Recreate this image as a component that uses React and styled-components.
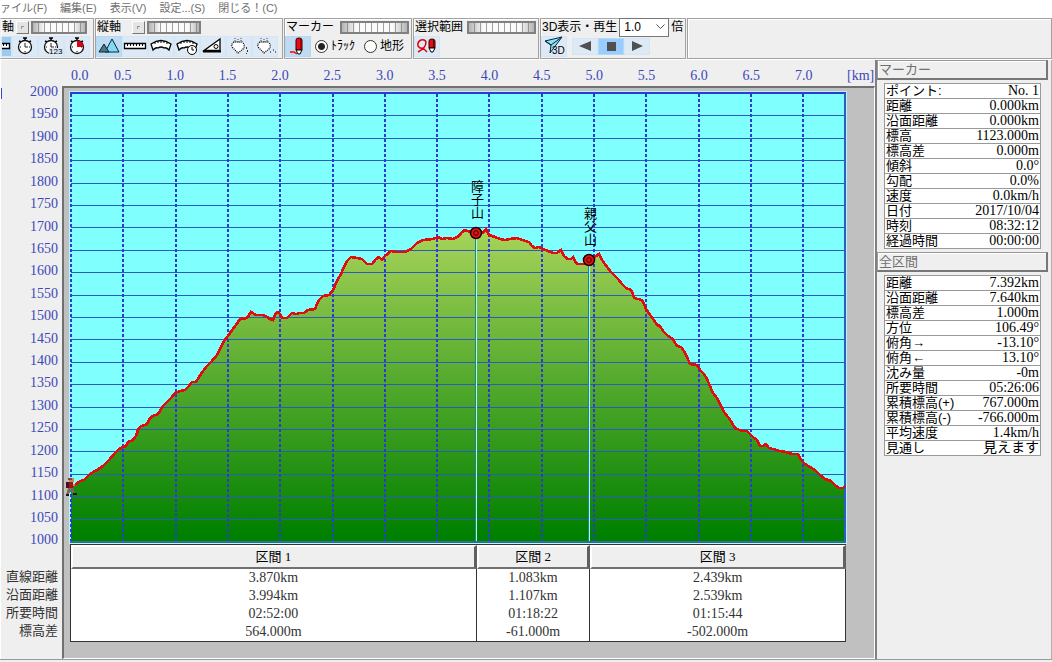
import React, { useState } from "react";
import styled, { createGlobalStyle } from "styled-components";

const TOTAL_KM = 7.392;

const menuItems = ["ァイル(F)", "編集(E)", "表示(V)", "設定...(S)", "閉じる！(C)"];

const kmTicks = [
  "0.0", "0.5", "1.0", "1.5", "2.0", "2.5", "3.0", "3.5",
  "4.0", "4.5", "5.0", "5.5", "6.0", "6.5", "7.0",
];

const heights = Array.from({ length: 21 }, (_, i) => 2000 - i * 50);

const markerRows = [
  ["ポイント:", "No. 1"],
  ["距離", "0.000km"],
  ["沿面距離", "0.000km"],
  ["標高", "1123.000m"],
  ["標高差", "0.000m"],
  ["傾斜", "0.0°"],
  ["勾配", "0.0%"],
  ["速度", "0.0km/h"],
  ["日付", "2017/10/04"],
  ["時刻", "08:32:12"],
  ["経過時間", "00:00:00"],
];

const totalRows = [
  ["距離", "7.392km"],
  ["沿面距離", "7.640km"],
  ["標高差", "1.000m"],
  ["方位", "106.49°"],
  ["俯角→", "-13.10°"],
  ["俯角←", "13.10°"],
  ["沈み量", "-0m"],
  ["所要時間", "05:26:06"],
  ["累積標高(+)", "767.000m"],
  ["累積標高(-)", "-766.000m"],
  ["平均速度", "1.4km/h"],
  ["見通し", "見えます"],
];

const sections = [
  { name: "区間 1", km: 3.87, values: ["3.870km", "3.994km", "02:52:00", "564.000m"] },
  { name: "区間 2", km: 1.083, values: ["1.083km", "1.107km", "01:18:22", "-61.000m"] },
  { name: "区間 3", km: 2.439, values: ["2.439km", "2.539km", "01:15:44", "-502.000m"] },
];

const sectionLabels = ["直線距離", "沿面距離", "所要時間", "標高差"];

const peaks = [
  { name: "障子山", x: 476, y: 233 },
  { name: "親父山", x: 589, y: 260 },
];

// x,y pairs in the chart's viewBox
const track =
  "71,486 75,485 80,481 84,480 90,474 97,470 103,466 109,460 115,453 119,449 123,447 126,446 128,442 133,440 136,436 138,430 141,426 145,425 147,424 150,418 153,416 158,414 160,411 163,406 167,402 171,398 175,393 180,391 185,390 189,386 192,382 196,382 199,377 203,371 207,366 211,362 217,355 221,347 224,341 228,336 232,330 236,325 240,319 247,318 251,312 256,315 262,315 266,316 270,319 273,320 276,313 278,312 280,314 282,318 287,318 292,313 296,314 300,313 304,313 308,310 315,309 317,304 319,300 323,296 329,295 333,290 337,281 341,274 344,267 347,261 351,257 357,258 362,259 367,264 372,264 376,259 379,257 382,260 385,256 391,251 396,252 400,252 405,252 411,249 414,246 417,243 423,240 433,239 438,237 442,239 447,238 453,239 459,236 462,232 465,230 470,232 476,233 483,233 486,229 489,235 495,237 500,239 505,240 510,239 517,238 522,240 529,242 532,246 535,248 539,247 543,249 548,251 553,253 557,253 561,250 564,256 568,259 571,259 573,257 575,261 577,264 584,264 590,261 596,256 599,254 601,258 604,263 611,272 615,276 618,279 622,284 626,288 631,290 633,294 634,298 642,300 644,304 646,309 650,315 654,320 657,325 660,326 663,331 668,336 673,339 677,346 681,347 684,351 687,357 690,364 697,365 700,370 704,374 707,379 710,386 713,393 717,398 720,404 724,412 728,417 731,421 735,428 742,431 747,431 750,434 753,437 757,440 760,446 763,446 766,444 769,448 773,449 780,451 786,452 792,454 798,454 801,460 805,464 810,467 815,470 820,475 825,479 831,481 835,485 839,488 843,488 845,486";

const GlobalStyle = createGlobalStyle`
  * {
    box-sizing: border-box;
  }

  body {
    margin: 0;
    background: #efefef;
    color: #000;
    font-family: "Liberation Sans", "Noto Sans CJK JP", sans-serif;
    font-size: 12px;
  }

  button, input, select {
    margin: 0;
    font: inherit;
    color: inherit;
  }
`;

const StopwatchIcon = ({ variant }) => (
  <svg width="24" height="20" viewBox="0 0 24 20">
    <path d="M10 2h4M12 2v2M6 5l2 1M18 5l-2 1" stroke="#000" strokeWidth="1.5" fill="none" />
    <circle cx="12" cy="11" r="6.5" fill="#fff" stroke="#111" strokeWidth="1.3" />
    {variant === "red" ? (
      <path d="M12 11V4.5A6.5 6.5 0 0 1 18.5 11z" fill="#e00010" />
    ) : (
      <path d="M12 7v4h3" stroke="#222" fill="none" />
    )}
    <path d="M7 11h1M12 15v1M16 11h1" stroke="#111" />
    {variant === "num" && (
      <>
        <path d="M10 12h14v8H10z" fill="#dde9f4" />
        <text x="10" y="18" fontSize="8" fontFamily="Liberation Sans">123</text>
      </>
    )}
  </svg>
);

const MountainIcon = () => (
  <svg width="24" height="20" viewBox="0 0 24 20">
    <path d="M8 16L15 3l7 13z" fill="#7edcf5" stroke="#123" />
    <path d="M2 16l5-8 5 8z" fill="#467a86" stroke="#123" />
  </svg>
);

const RulerIcon = () => (
  <svg width="24" height="20" viewBox="0 0 24 20">
    <path d="M1.500 7.500h21v5h-21z" fill="#fff" stroke="#000" strokeWidth="1.300" />
    <path d="M4.500 8v2M7.500 8v2M10.500 8v2M13.500 8v2M16.500 8v2M19.500 8v2" stroke="#000" />
  </svg>
);

const CurvedRulerIcon = ({ clock }) => (
  <svg width="24" height="20" viewBox="0 0 24 20">
    <path
      d="M2 8Q12 1 22 8L20 14Q17 11 15 12Q12 10 9 12Q7 11 4 14z"
      fill="#fff"
      stroke="#000"
      strokeWidth="1.300"
    />
    <path d="M6 6v2M9 5v2M12 5v2M15 5v2M18 6v2" stroke="#000" />
    {clock && (
      <>
        <circle cx="17" cy="14" r="4.500" fill="#fff" stroke="#000" />
        <path d="M17 11v3h2" stroke="#000" fill="none" />
      </>
    )}
  </svg>
);

const SlopeIcon = () => (
  <svg width="24" height="20" viewBox="0 0 24 20">
    <path d="M3 14.500L19 3v11.500z" fill="#fff" stroke="#000" strokeWidth="1.300" />
    <path d="M2 15.500h18" stroke="#000" strokeWidth="2" />
    <circle cx="15" cy="10.500" r="2" fill="#fff" stroke="#000" />
  </svg>
);

const PlugIcon = ({ dots }) => (
  <svg width="24" height="20" viewBox="0 0 24 20">
    <path
      d="M7 6Q3 9 6 12L11 17L16 13Q19 9 15 6z"
      fill="#fff"
      stroke="#000"
      strokeWidth="1.300"
      strokeDasharray="1 1"
    />
    <path d="M8 2v4M11 3v3M14 2v4" stroke="#444" strokeDasharray="1 1" />
    {dots ? (
      <path d="M17 16h1M20 14h1M22 16h1" stroke="#000" />
    ) : (
      <path d="M19.500 11v2M20.500 14v2M19.500 17v1" stroke="#333" />
    )}
  </svg>
);

const PencilIcon = () => (
  <svg width="24" height="20" viewBox="0 0 24 20">
    <path d="M10 4q0-2 3-2t3 2v10H10z" fill="#e80c12" stroke="#300" />
    <path d="M14.500 3v10" stroke="#a00" />
    <path d="M10 14h6l-2 4h-2z" fill="#fff" stroke="#000" />
    <path d="M4 16h4l3 2" stroke="#f00" strokeWidth="1.500" fill="none" />
  </svg>
);

const RangeIcon = () => (
  <svg width="24" height="20" viewBox="0 0 24 20">
    <path d="M3 16Q11 12 11 6Q10 3 6 4Q2 6 3 10Q5 13 8 12L12 16" fill="none" stroke="#e00010" strokeWidth="1.500" />
    <path d="M14 5q0-2 3-2t3 2v7h-6z" fill="#e80c12" stroke="#300" />
    <path d="M18.500 4v8" stroke="#600" />
    <path d="M14 12h6l-2 4h-2z" fill="#fff" stroke="#000" />
  </svg>
);

const FlyIcon = () => (
  <svg width="24" height="20" viewBox="0 0 24 20">
    <path d="M3 5L20 1L8 17L9 9z" fill="#8fe2f2" stroke="#024" />
    <path d="M20 1L9 9L3 5" fill="none" stroke="#024" />
    <text x="10" y="18" fontSize="10" fontFamily="Liberation Sans">3D</text>
  </svg>
);

const PlayIcon = ({ kind }) => (
  <svg width="24" height="16" viewBox="0 0 24 16">
    {kind === "back" && <path d="M6 8l12-5v10z" fill="#505050" />}
    {kind === "stop" && <path d="M8 4h9v9H8z" fill="#505050" />}
    {kind === "play" && <path d="M18 8L7 3v10z" fill="#505050" />}
  </svg>
);

const Hiker = () => (
  <svg width="12" height="20" viewBox="0 0 12 20">
    <path d="M4 1h5v4H4z" fill="#c8845a" />
    <path d="M3 1h4v2H3z" fill="#7a4a30" />
    <path d="M3 5h5v6H3z" fill="#a01020" />
    <path d="M1 5h3v6H1z" fill="#4c1018" />
    <path d="M8 7h2v2H8z" fill="#c8845a" />
    <path d="M3 11h5l2 6H8l-2-3-3 4H1z" fill="#756a58" />
    <path d="M1 17h3v2H1zM8 16h4v2H8z" fill="#201818" />
  </svg>
);

const App = () => {
  const [shape, setShape] = useState("track");
  const [speed, setSpeed] = useState("1.0");

  return (
    <Page>
      <GlobalStyle />
      <Menu>
        {menuItems.map((item) => (
          <MenuItem key={item} type="button">{item}</MenuItem>
        ))}
      </Menu>

      <Toolbar>
        <Group $width={94}>
          <GroupRow>
            <GroupLabel>軸</GroupLabel>
            <ResetButton type="button" aria-label="横軸リセット" />
            <Dial type="range" aria-label="横軸" $width={56} />
          </GroupRow>
          <IconRow>
            <CutButton type="button" aria-label="距離"><RulerIcon /></CutButton>
            <IconButton type="button" aria-label="時間"><StopwatchIcon /></IconButton>
            <IconButton type="button" aria-label="時刻"><StopwatchIcon variant="num" /></IconButton>
            <IconButton type="button" aria-label="経過"><StopwatchIcon variant="red" /></IconButton>
          </IconRow>
        </Group>
        <Group $width={188}>
          <GroupRow>
            <GroupLabel>縦軸</GroupLabel>
            <ResetButton type="button" aria-label="縦軸リセット" $gap={9} />
            <Dial type="range" aria-label="縦軸" $width={54} />
          </GroupRow>
          <IconRow>
            <IconButton type="button" aria-label="標高" $on><MountainIcon /></IconButton>
            <IconButton type="button" aria-label="距離"><RulerIcon /></IconButton>
            <IconButton type="button" aria-label="沿面距離"><CurvedRulerIcon /></IconButton>
            <IconButton type="button" aria-label="速度"><CurvedRulerIcon clock /></IconButton>
            <IconButton type="button" aria-label="傾斜"><SlopeIcon /></IconButton>
            <IconButton type="button" aria-label="心拍"><PlugIcon /></IconButton>
            <IconButton type="button" aria-label="心拍グラフ"><PlugIcon dots /></IconButton>
          </IconRow>
        </Group>
        <Group $width={128}>
          <GroupRow $spread>
            <GroupLabel>マーカー</GroupLabel>
            <Dial type="range" aria-label="マーカー" $width={69} />
          </GroupRow>
          <IconRow>
            <IconButton type="button" aria-label="マーカー描画" $on><PencilIcon /></IconButton>
            <RadioGroup>
              <RadioLabel>
                <input type="radio" name="shape" checked={shape === "track"} onChange={() => setShape("track")} />
                ﾄﾗｯｸ
              </RadioLabel>
              <RadioLabel>
                <input type="radio" name="shape" checked={shape === "land"} onChange={() => setShape("land")} />
                地形
              </RadioLabel>
            </RadioGroup>
          </IconRow>
        </Group>
        <Group $width={126}>
          <GroupRow $spread>
            <GroupLabel>選択範囲</GroupLabel>
            <Dial type="range" aria-label="選択範囲" $width={69} />
          </GroupRow>
          <IconRow>
            <IconButton type="button" aria-label="範囲選択"><RangeIcon /></IconButton>
          </IconRow>
        </Group>
        <Group $width={144}>
          <GroupRow>
            <GroupLabel htmlFor="speed">3D表示・再生</GroupLabel>
            <SelectBox>
              <select id="speed" value={speed} onChange={(e) => setSpeed(e.target.value)}>
                <option>1.0</option>
                <option>2.0</option>
                <option>5.0</option>
              </select>
              <svg width="9" height="6" viewBox="0 0 9 6">
                <path d="M0.500 0.500l4 4 4-4" fill="none" stroke="#555" />
              </svg>
            </SelectBox>
            <span>倍</span>
          </GroupRow>
          <IconRow>
            <IconButton type="button" aria-label="3D"><FlyIcon /></IconButton>
            <PlayButtons>
              <PlayButton type="button" aria-label="逆再生"><PlayIcon kind="back" /></PlayButton>
              <PlayButton type="button" aria-label="停止" $on><PlayIcon kind="stop" /></PlayButton>
              <PlayButton type="button" aria-label="再生"><PlayIcon kind="play" /></PlayButton>
            </PlayButtons>
          </IconRow>
        </Group>
        <Group />
      </Toolbar>

      <Main>
        <LeftAxis>
          <UnitEdge />
          <Heights>
            {heights.map((h) => (
              <span key={h}>{h}</span>
            ))}
          </Heights>
          <SectionLabels>
            {sectionLabels.map((label) => (
              <span key={label}>{label}</span>
            ))}
          </SectionLabels>
        </LeftAxis>

        <ChartColumn>
          <TopAxis>
            <Ticks>
              {kmTicks.map((km) => (
                <Tick key={km}>{km}</Tick>
              ))}
            </Ticks>
            <Unit>[km]</Unit>
          </TopAxis>
          <ChartPanel>
            <Plot>
              <svg viewBox="70 92 776 451" preserveAspectRatio="none">
                <defs>
                  <linearGradient id="land" gradientUnits="userSpaceOnUse" x1="0" y1="228" x2="0" y2="535">
                    <stop offset="0" stopColor="#a8d45a" />
                    <stop offset="1" stopColor="#008000" />
                  </linearGradient>
                </defs>
                <path d="M70 92h776v451H70z" fill="#80ffff" />
                <polygon points={`71,541 ${track} 845,541`} fill="url(#land)" />
                <g shapeRendering="crispEdges">
                  {heights.map((h, i) => (
                    <path key={h} d={`M71 ${Math.floor(93.5 + i * 22.4) + 0.5}H846`} stroke="#2a5cc0" />
                  ))}
                  {kmTicks.map((km, i) => (
                    <path
                      key={km}
                      d={`M${Math.round(71 + i * 52.3)} 94V541`}
                      stroke="#2c3cd0"
                      strokeWidth="2"
                      strokeDasharray="3 2"
                    />
                  ))}
                  <path d="M70 93H846" stroke="#2c3cd0" strokeWidth="2" />
                  <path d="M845 93V542" stroke="#2c5cc8" strokeWidth="2" />
                  <path d="M70 542H846" stroke="#2c708c" strokeWidth="2" />
                  {peaks.map((peak) => (
                    <g key={peak.name}>
                      <path d={`M${peak.x - 0.5} ${peak.y}V541`} stroke="#208090" />
                      <path d={`M${peak.x + 0.5} ${peak.y}V541`} stroke="#a8fff0" />
                    </g>
                  ))}
                </g>
                <polyline points={track} fill="none" stroke="#e20c0c" strokeWidth="2.600" shapeRendering="crispEdges" />
              </svg>
              {peaks.map((peak) => (
                <Peak
                  key={peak.name}
                  style={{ left: `${((peak.x - 70) / 776) * 100}%`, bottom: 543 - peak.y - 7 }}
                >
                  <PeakName>{peak.name}</PeakName>
                  <svg width="14" height="14" viewBox="0 0 14 14">
                    <circle cx="7" cy="7" r="5.500" fill="#e01414" stroke="#200" strokeWidth="1.500" />
                    <circle cx="7" cy="7" r="2.300" fill="none" stroke="#400" />
                  </svg>
                </Peak>
              ))}
              <Start><Hiker /></Start>
            </Plot>
            <SectionTable>
              <colgroup>
                {sections.map((s) => (
                  <col key={s.name} style={{ width: `${(s.km / TOTAL_KM) * 100}%` }} />
                ))}
              </colgroup>
              <thead>
                <tr>
                  {sections.map((s) => (
                    <th key={s.name} scope="col">{s.name}</th>
                  ))}
                </tr>
              </thead>
              <tbody>
                {sectionLabels.map((label, i) => (
                  <tr key={label}>
                    {sections.map((s) => (
                      <td key={s.name}>{s.values[i]}</td>
                    ))}
                  </tr>
                ))}
              </tbody>
            </SectionTable>
          </ChartPanel>
        </ChartColumn>

        <Side>
          <SideTitle>マーカー</SideTitle>
          <InfoTable>
            <tbody>
              {markerRows.map(([name, value]) => (
                <tr key={name}>
                  <th scope="row">{name}</th>
                  <td>{value}</td>
                </tr>
              ))}
            </tbody>
          </InfoTable>
          <SideTitle>全区間</SideTitle>
          <InfoTable>
            <tbody>
              {totalRows.map(([name, value]) => (
                <tr key={name}>
                  <th scope="row">{name}</th>
                  <td>{value}</td>
                </tr>
              ))}
            </tbody>
          </InfoTable>
        </Side>
      </Main>
    </Page>
  );
};

const Page = styled.div`
  min-height: 100vh;
  background: #efefef;
  line-height: 16px;
`;

const Menu = styled.nav`
  display: flex;
  gap: 13px;
  height: 18px;
  background: #fff;
`;

const MenuItem = styled.button`
  padding: 0;
  border: 0;
  background: none;
  color: #707070;
  font-size: 11px;
  line-height: 15px;
  height: 16px;
  white-space: nowrap;
`;

const Toolbar = styled.div`
  display: flex;
  gap: 1px;
  height: 41px;
`;

const Group = styled.div`
  flex: ${({ $width }) => ($width ? `0 0 ${$width}px` : "1")};
  border: 1px solid #a2a2a2;
  border-left-color: ${({ $width }) => ($width === 94 ? "transparent" : "#a2a2a2")};
  box-shadow: inset 1px 1px 0 #fff;
`;

const GroupRow = styled.div`
  display: flex;
  align-items: center;
  justify-content: ${({ $spread }) => ($spread ? "space-between" : "flex-start")};
  gap: 2px;
  height: 16px;
  padding: 0 2px 0 1px;
  white-space: nowrap;
`;

const GroupLabel = styled.label`
  flex-shrink: 0;
`;

const ResetButton = styled.button`
  width: 13px;
  height: 13px;
  padding: 0;
  margin-left: ${({ $gap = 0 }) => $gap}px;
  border: 1px solid #fff;
  border-right-color: #777;
  border-bottom-color: #777;
  background: linear-gradient(#999, #999) 4px 4px / 3px 1px no-repeat,
    linear-gradient(#999, #999) 4px 4px / 1px 3px no-repeat, #e4e4e4;
`;

const Dial = styled.input`
  appearance: none;
  width: ${({ $width }) => $width}px;
  height: 13px;
  border: 2px solid #808080;
  background: linear-gradient(90deg, #7778, #fff0 22%, #fff0 78%, #7778),
    repeating-linear-gradient(90deg, #fafafa 0 5px, #a0a0a0 5px 6px);

  &::-webkit-slider-thumb {
    appearance: none;
    width: 1px;
    height: 9px;
  }
`;

const IconRow = styled.div`
  display: flex;
  align-items: center;
  height: 22px;
`;

const IconButton = styled.button`
  display: flex;
  align-items: center;
  justify-content: center;
  flex: 0 0 26px;
  height: 21px;
  padding: 0;
  border: 1px solid ${({ $on }) => ($on ? "#b4d8f4" : "#d4e6f6")};
  background: ${({ $on }) => ($on ? "#bddcf4" : "#dde9f4")};

  & svg {
    flex-shrink: 0;
  }
`;

const CutButton = styled(IconButton)`
  flex-basis: 11px;
  justify-content: flex-end;
  overflow: hidden;
  background: #99ccf5;
`;

const RadioGroup = styled.div`
  display: flex;
  gap: 9px;
  margin-left: 4px;
`;

const RadioLabel = styled.label`
  display: flex;
  align-items: center;
  gap: 3px;
  white-space: nowrap;

  & input {
    width: 13px;
    height: 13px;
    appearance: none;
    border: 1px solid #333;
    border-radius: 50%;
    background: #fff;
  }

  & input:checked {
    background: radial-gradient(#222 0 3px, #fff 4px);
  }
`;

const SelectBox = styled.div`
  display: flex;
  align-items: center;
  position: relative;

  & select {
    appearance: none;
    width: 50px;
    height: 19px;
    padding: 0 4px;
    border: 1px solid #777;
    border-radius: 0;
    background: #fff;
  }

  & svg {
    position: absolute;
    right: 4px;
    pointer-events: none;
  }
`;

const PlayButtons = styled.div`
  display: flex;
  margin-left: 5px;
`;

const PlayButton = styled(IconButton)`
  height: 17px;
  background: ${({ $on }) => ($on ? "#99ccff" : "#dde9f4")};
`;

const Main = styled.main`
  display: grid;
  grid-template-columns: 62px 1fr 177px;
  border-top: 1px solid #fff;
  border-bottom: 1px solid #9a9a9a;
`;

const LeftAxis = styled.div`
  position: relative;
  padding: 21px 4px 0 0;
  border-left: 1px solid #fff;
  text-align: right;
`;

const UnitEdge = styled.div`
  position: absolute;
  top: 28px;
  left: 0;
  width: 1px;
  height: 11px;
  background: #3c48b8;
`;

const Heights = styled.div`
  display: flex;
  flex-direction: column;
  height: 471px;
  color: #3c48b8;
  font-family: "Liberation Serif", serif;
  font-size: 14px;

  & span {
    flex: 1;
    line-height: 22px;
  }
`;

const SectionLabels = styled.div`
  display: flex;
  flex-direction: column;
  padding-top: 16px;
  color: #333;
  font-size: 13px;
  line-height: 18px;
`;

const ChartColumn = styled.div`
  display: flex;
  flex-direction: column;
  min-width: 0;
`;

const TopAxis = styled.div`
  display: flex;
  height: 26px;
  padding: 8px 0 0 9px;
  color: #3c48b8;
  font-family: "Liberation Serif", serif;
  font-size: 14px;
`;

const Ticks = styled.div`
  display: flex;
  flex: 1;
`;

const Tick = styled.span`
  flex: 0 0 6.75%;
  text-align: center;

  &:first-child {
    flex-basis: 3.3%;
    text-align: left;
  }
`;

const Unit = styled.span`
  width: 28px;
`;

const ChartPanel = styled.div`
  flex: 1;
  padding: 4px 28px 16px 6px;
  border: 2px solid #707070;
  border-right: 1px solid #fff;
  border-bottom: 1px solid #fff;
  background: #c0c0c0;
`;

const Plot = styled.div`
  position: relative;
  height: 451px;
  box-shadow: 0 0 0 1px #b8f4f8;

  & > svg {
    display: block;
    width: 100%;
    height: 100%;
  }
`;

const Peak = styled.div`
  position: absolute;
  display: flex;
  flex-direction: column;
  align-items: center;
  gap: 7px;
  width: 14px;
  margin-left: -7px;
`;

const PeakName = styled.span`
  writing-mode: vertical-rl;
  font-size: 13px;
  line-height: 14px;
  white-space: nowrap;
`;

const Start = styled.div`
  position: absolute;
  left: -5px;
  bottom: 46px;
  height: 20px;
`;

const SectionTable = styled.table`
  width: 100%;
  margin-top: 1px;
  table-layout: fixed;
  border-collapse: separate;
  border-spacing: 0;
  border: 1px solid #333;
  border-right: 0;
  background: #fff;
  color: #333;
  font-family: "Liberation Serif", "Noto Sans CJK JP", serif;
  font-size: 14px;
  text-align: center;

  & th {
    height: 24px;
    padding: 0;
    border: 2px solid #fff;
    border-right: 3px solid #606060;
    border-bottom: 2px solid #707070;
    background: #efefef;
    color: #000;
    font-size: 13px;
    font-weight: normal;
    line-height: 18px;
  }

  & td {
    height: 18px;
    padding: 0;
    border-right: 1px solid #333;
    line-height: 18px;
  }
`;

const Side = styled.aside`
  padding: 0 3px 0 0;
  border-left: 2px solid #808080;
  border-right: 1px solid #b0b0b0;
`;

const SideTitle = styled.h2`
  height: 20px;
  margin: 0;
  padding: 0 1px;
  border: 1px solid #999;
  border-right: 2px solid #777;
  border-bottom: 2px solid #777;
  box-shadow: inset 1px 1px 0 #fff;
  color: #707070;
  font-size: 13px;
  font-weight: normal;
  line-height: 17px;
`;

const InfoTable = styled.table`
  width: calc(100% - 14px);
  margin: 3px 7px;
  border-collapse: collapse;
  background: #fff;
  font-size: 13px;
  line-height: 14px;

  & th,
  & td {
    height: 15px;
    padding: 0 1px;
    border: solid #999;
    border-width: 1px 0;
    white-space: nowrap;
  }

  & th {
    border-left-width: 1px;
    font-weight: normal;
    text-align: left;
  }

  & td {
    border-right-width: 1px;
    font-family: "Liberation Serif", "Noto Sans CJK JP", serif;
    font-size: 14px;
    text-align: right;
  }
`;

export default App;
